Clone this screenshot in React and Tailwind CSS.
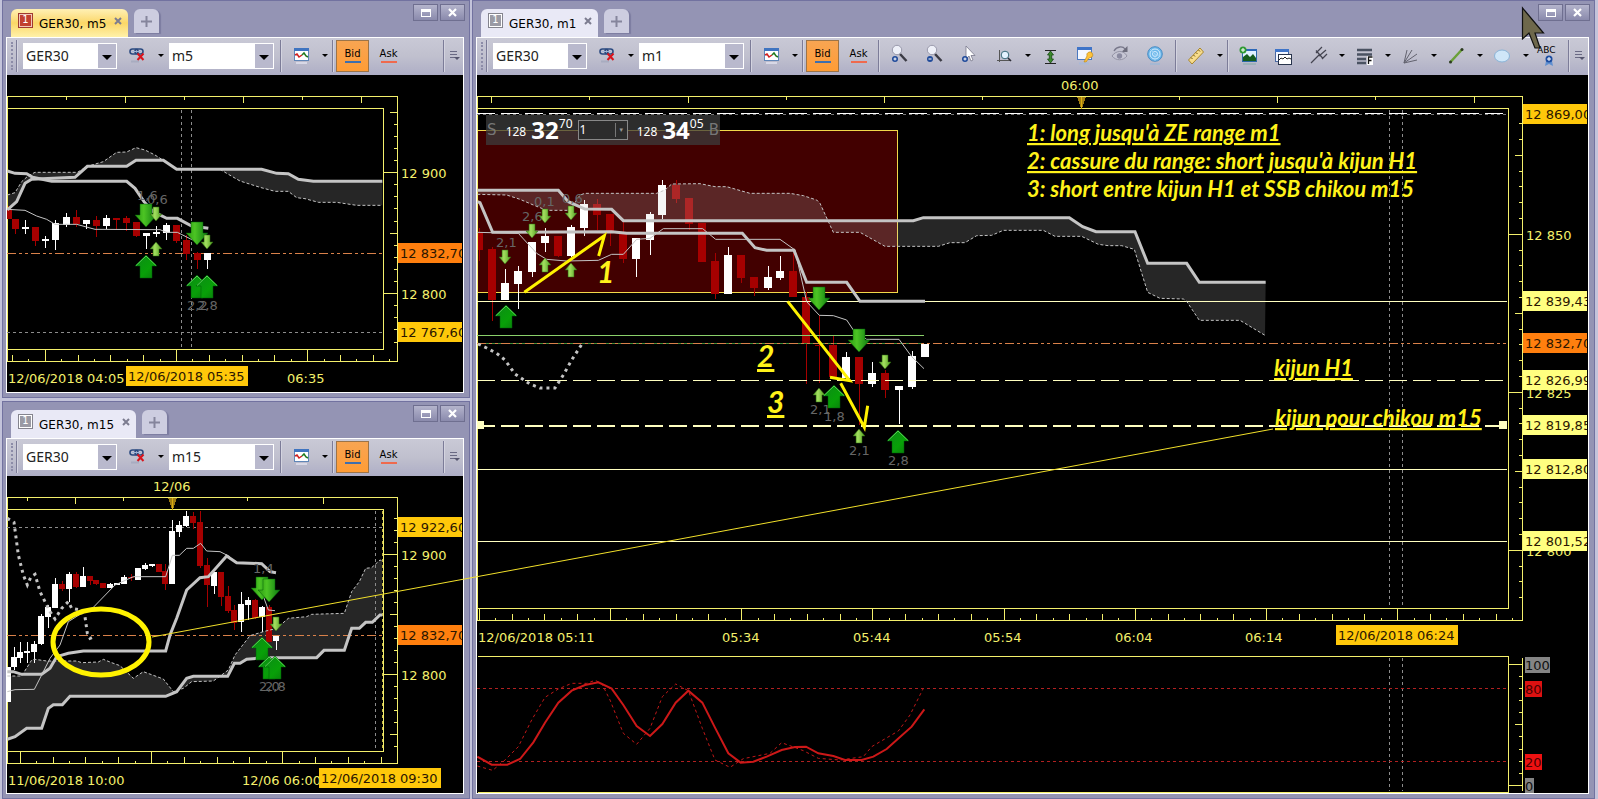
import { useState } from 'react';

const VERDANA = "[font-family:'DejaVu_Sans',Verdana,sans-serif]";
const AXIS = '#f4f06c';
const CREAM = '#ffffc0';
const BULL = '#ffffff';
const BEAR = '#a60000';
const LINE = '#c4c4c4';

// plot data is stored at 3 units per pixel
const U = 3;

const toPoints = (s) =>
  s
    .split(' ')
    .map((p) => p.split(',').map((n) => Number(n) / U).join(','))
    .join(' ');

const px = (n) => Math.floor(n / U) + 0.5;

function Poly({ d, w = 1, color = LINE, dash }) {
  return <polyline points={toPoints(d)} fill="none" stroke={color} strokeWidth={w} strokeDasharray={dash} />;
}

function Cloud({ d, color = '#262626' }) {
  return <polygon points={toPoints(d)} fill={color} />;
}

const reversed = (s) => s.split(' ').reverse().join(' ');

function HLine({ y, x1 = 22, x2, color, dash, w = 1 }) {
  return (
    <line x1={x1 / U} x2={x2 / U} y1={px(y)} y2={px(y)} stroke={color} strokeWidth={w} strokeDasharray={dash} shapeRendering="crispEdges" />
  );
}

function VLine({ x, y1, y2, color = '#8c8c8c', dash = '3 3' }) {
  return (
    <line x1={px(x)} x2={px(x)} y1={y1 / U} y2={y2 / U} stroke={color} strokeDasharray={dash} shapeRendering="crispEdges" />
  );
}

// [kind, x, high, bodyTop, bodyBottom, low]
function Candles({ data, w }) {
  return (
    <g shapeRendering="crispEdges">
      {data.map(([kind, x, hi, top, bot, lo], i) => {
        const color = kind === 'w' ? BULL : BEAR;
        const cx = Math.floor(x / U);
        return (
          <g key={i} fill={color}>
            <rect x={cx} y={hi / U} width="1" height={Math.max(1, (lo - hi) / U)} />
            <rect x={cx - Math.floor(w / 2)} y={top / U} width={w} height={Math.max(1, (bot - top) / U)} />
          </g>
        );
      })}
    </g>
  );
}

// [kind, x, top] with kind U/D for large, u/d for small
function Arrows({ data }) {
  const shapes = {
    U: 'M0 0L11 11H6V23H-6V11H-11Z',
    D: 'M0 23L11 11H6V0H-6V11H-11Z',
    u: 'M0 0L6 7H3V14H-3V7H-6Z',
    d: 'M0 14L6 7H3V0H-3V7H-6Z',
  };
  const fills = { U: 'url(#up)', D: 'url(#down)', u: 'url(#small)', d: 'url(#small)' };
  return data.map(([k, x, y], i) => (
    <g key={i} transform={`translate(${Math.round(x / U)} ${Math.round(y / U)})`}>
      <path d={shapes[k]} fill={fills[k]} stroke={k === 'u' || k === 'd' ? '#2f6b12' : '#035c08'} strokeWidth="0.5" />
      {k === 'U' && <path d="M-10 10.5L0 1L10 10.5" fill="none" stroke="#6fe06a" strokeWidth="0.8" />}
    </g>
  ));
}

function Label({ x, y, children, color = AXIS }) {
  return (
    <text x={Math.round(x / U)} y={Math.round(y / U)} fill={color} className={`text-[13px] ${VERDANA}`} xmlSpace="preserve">
      {children}
    </text>
  );
}

function Marks({ data }) {
  return data.map(([t, x, y], i) => (
    <Label key={i} x={x} y={y} color="#666666">
      {t}
    </Label>
  ));
}

function Tag({ x, y, w, fill, color = '#2b1600', children }) {
  return (
    <svg x={Math.round(x / U)} y={Math.round(y / U)} width={w} height="20">
      <rect width={w} height="20" fill={fill} />
      <text x="2" y="15" fill={color} className={`text-[13px] ${VERDANA}`}>
        {children}
      </text>
    </svg>
  );
}

const range = (a, b) => Array.from({ length: b - a + 1 }, (_, i) => a + i);

function Frame({ top, inTop, inBot, bot, inRight, right, topTicks, marker, xBase, xFrom, xTo, yBase, yStep, yFrom, yTo }) {
  return (
    <g stroke={AXIS} fill="none" shapeRendering="crispEdges">
      <path d={`M7.5 ${bot}V${top}H${right}V${bot}H7.5`} />
      <path d={`M7.5 ${inTop}H${inRight}V${inBot}H7.5`} />
      {topTicks.map(([x, len]) => (
        <path key={x} d={`M${px(x)} ${top}v${len}`} />
      ))}
      {range(xFrom, xTo).map((k) => (
        <path key={k} d={`M${Math.floor((xBase + k * 49.2) / U) + 0.5} ${bot}v${k % 8 === 0 ? -12 : k % 2 === 0 ? -7 : -3}`} />
      ))}
      {range(yFrom, yTo).map((k) => (
        <path key={k} d={`M${right} ${Math.floor((yBase + k * yStep) / U) + 0.5}h${k % 10 === 0 ? inRight - right : k % 5 === 0 ? -8 : -4}`} />
      ))}
      {marker && (
        <g stroke="none">
          <path d={`M${Math.floor(marker / U) - 4} ${top + 0.5}h9l-4 11h-1z`} fill="#a07c10" />
          <rect x={Math.floor(marker / U)} y={top} width="1" height="12" fill="#d8ac10" />
        </g>
      )}
    </g>
  );
}

const PRICE_DASH = '9 3 3 3 3 3';

const M5 = {
  a1: '22,345 45,338 65,305 85,287 105,277 232,277 262,259 310,245 350,217 380,216 408,203 435,210 465,225 490,241',
  b1: '22,390 50,365 75,310 95,298 225,292 262,259 380,259 408,241 490,241',
  a2: '660,268 680,280 720,303 780,322 825,334 865,334 890,353 915,356 955,367 1010,367 1070,376 1147,376',
  b2: '660,268 785,268 830,280 865,281 895,298 940,304 1147,304',
  candles: [
    ['r', 25, 378, 388, 418, 418], ['r', 46, 418, 418, 447, 462], ['w', 76, 421, 440, 446, 462],
    ['r', 106, 441, 441, 483, 498], ['w', 136, 468, 478, 484, 503], ['w', 166, 421, 430, 480, 510],
    ['w', 199, 400, 411, 434, 440], ['r', 230, 390, 410, 431, 440], ['w', 260, 420, 420, 431, 448],
    ['r', 289, 409, 420, 438, 471], ['w', 319, 405, 415, 438, 448], ['r', 349, 415, 414, 419, 447],
    ['r', 379, 408, 415, 430, 452], ['r', 410, 427, 427, 468, 470], ['w', 439, 458, 458, 468, 507],
    ['w', 469, 438, 455, 461, 470], ['w', 499, 430, 435, 458, 480], ['r', 529, 435, 435, 483, 490],
    ['r', 559, 465, 480, 521, 540], ['r', 592, 515, 520, 541, 567], ['w', 622, 520, 520, 541, 567],
  ],
};

function ChartM5() {
  return (
    <svg className="block w-full h-[317px] bg-black" role="img" aria-label="GER30 m5">
      <g transform="translate(-7 5)">
        <Cloud d={`${M5.a1} ${reversed(M5.b1)}`} />
        <Cloud d={`${M5.a2} ${reversed(M5.b2)}`} />
        <Frame top={16.5} inTop={28.5} inBot={269.5} bot={281.5} inRight={383.5} right={397.5}
          topTicks={[[199, 3], [376, 6], [553, 3], [730, 6], [907, 3], [1084, 6]]}
          xBase={136} xFrom={-2} xTo={21} yBase={278} yStep={36.3} yFrom={-5} yTo={14} />
        <HLine y={757} x2={1150} color="#8c8c8c" dash="3 3" />
        <VLine x={544} y1={90} y2={802} />
        <VLine x={574} y1={90} y2={802} />
        <HLine y={520} x2={1147} color="#d9814a" dash={PRICE_DASH} />
        <Candles data={M5.candles} w={7} />
        <Poly d={M5.a1} dash="3 2" />
        <Poly d={M5.a2} dash="3 2" />
        <Poly d="22,388 75,391 110,408 140,418 165,433 230,433 285,448 480,449 500,457 532,457 578,480" />
        <Poly d="22,273 45,280 80,281 98,292 155,304 380,304 405,325 432,365 460,395 500,415 532,415 575,438 625,445" w={3} />
        <Poly d="22,390 50,365 75,310 95,298 225,292 262,259 380,259 408,241 490,241 530,268 785,268 830,280 865,281 895,298 940,304 1147,304" w={3} />
        <Marks data={[['1,6', 412, 360], ['0,6', 440, 373], ['2,2', 562, 690], ['2,8', 592, 690]]} />
        <Arrows data={[['D', 439, 371], ['d', 469, 380], ['u', 469, 487], ['U', 439, 526], ['D', 592, 425], ['d', 622, 464], ['U', 592, 586], ['U', 622, 586]]} />
        <Label x={1203} y={293}>12 900</Label>
        <Label x={1203} y={656}>12 800</Label>
        <Tag x={1194} y={489} w={64} fill="#ff7f0e">12 832,70</Tag>
        <Tag x={1194} y={726} w={64} fill="#ffc80a">12 767,60</Tag>
        <Label x={24} y={908}>12/06/2018 04:05</Label>
        <Tag x={378} y={858} w={122} fill="#ffc80a">12/06/2018 05:35</Tag>
        <Label x={862} y={908}>06:35</Label>
      </g>
    </svg>
  );
}

const M15 = {
  a: '22,843 65,843 95,795 105,793 140,798 230,798 245,803 295,801 310,793 335,803 360,812 400,850 430,830 490,852 520,890 550,880 575,860 640,858 665,840 685,825 705,780 750,722 790,710 830,700 865,670 920,665 935,658 1033,655 1055,590 1078,560 1097,520 1115,518 1140,495 1147,498',
  b: '22,1033 45,1025 80,1000 125,1000 145,940 160,929 187,929 210,904 497,904 530,890 560,850 580,844 683,844 703,805 720,805 740,793 790,788 950,788 972,766 1033,766 1055,700 1078,700 1097,682 1117,682 1140,660 1147,660',
  candles: [
    ['w', 26, 815, 815, 922, 922], ['w', 42, 757, 787, 815, 825], ['w', 62, 742, 772, 790, 805],
    ['w', 82, 742, 768, 774, 805], ['w', 103, 738, 748, 770, 803], ['w', 124, 657, 663, 748, 750],
    ['w', 146, 630, 637, 667, 700], ['w', 166, 550, 567, 638, 640], ['r', 186, 557, 567, 581, 588],
    ['w', 207, 530, 537, 581, 620], ['r', 229, 530, 538, 576, 578], ['w', 249, 515, 543, 575, 577],
    ['r', 270, 543, 543, 557, 570], ['r', 290, 555, 555, 566, 569], ['r', 310, 565, 565, 578, 580],
    ['w', 331, 565, 567, 578, 580], ['w', 352, 563, 565, 570, 570], ['w', 373, 540, 545, 566, 566],
    ['r', 394, 538, 545, 550, 558], ['w', 414, 518, 520, 554, 555], ['w', 435, 505, 510, 521, 524],
    ['w', 456, 508, 507, 513, 515], ['r', 477, 508, 508, 530, 531], ['r', 497, 508, 528, 568, 585],
    ['w', 516, 375, 408, 566, 568], ['w', 538, 378, 390, 411, 425], ['w', 559, 348, 364, 392, 395],
    ['r', 580, 352, 362, 384, 402], ['r', 600, 348, 382, 512, 520], ['r', 621, 490, 510, 571, 635],
    ['w', 642, 530, 532, 573, 598], ['r', 663, 530, 532, 606, 632], ['r', 684, 572, 603, 647, 655],
    ['r', 704, 630, 645, 683, 705], ['w', 724, 590, 627, 682, 710], ['w', 744, 605, 615, 630, 675],
    ['r', 766, 612, 615, 668, 672], ['w', 787, 632, 636, 667, 710], ['r', 807, 630, 636, 740, 742],
    ['w', 828, 722, 722, 738, 765],
  ],
};

function ChartM15() {
  return (
    <svg className="block w-full h-[317px] bg-black" role="img" aria-label="GER30 m15">
      <g transform="translate(-7 -81)">
        <Cloud d={`${M15.a} ${reversed(M15.b)}`} />
        <Frame top={102.5} inTop={114.5} inBot={356.5} bot={368.5} inRight={383.5} right={397.5}
          topTicks={[[82, 3], [227, 6], [370, 3], [742, 3], [970, 6]]} marker={517}
          xBase={61} xFrom={0} xTo={22} yBase={479} yStep={36} yFrom={-3} yTo={16} />
        <HLine y={398} x2={1150} color="#8c8c8c" dash="3 3" />
        <VLine x={1126} y1={348} y2={1060} />
        <VLine x={1147} y1={348} y2={1060} color="#c9b84a" />
        <HLine y={721} x2={1147} color="#d9814a" dash={PRICE_DASH} />
        <Candles data={M15.candles} w={6} />
        <Poly d={M15.a} dash="3 2" />
        <Poly d="22,370 42,382 55,480 70,540 82,570 93,545 105,538 120,590 150,650 165,672 185,640 205,620 215,640 240,645 255,665 262,715 270,730 282,725" w={3} dash="3 4" />
        <Poly d="22,890 45,884 103,883 125,840 150,790 180,750 205,680 245,655 280,637 345,570 400,545 497,545 517,481 538,481 560,460 580,460 602,445 620,468 660,470 690,485" />
        <Poly d="785,590 805,645 825,647" />
        <Poly d="22,830 40,830 65,838 125,838 150,820 170,785 205,775 250,768 497,768 510,720 530,670 560,585 600,548 625,545 680,483 710,503 785,506 810,530 828,533" w={3} />
        <Poly d={M15.b} w={3} />
        <Marks data={[['1,4', 760, 533], ['2,0', 776, 888], ['2,8', 796, 888]]} />
        <Arrows data={[['D', 787, 545], ['D', 806, 553], ['d', 827, 667], ['U', 787, 727], ['U', 806, 784], ['U', 826, 784]]} />
        <ellipse cx="101" cy="247" rx="48" ry="33" fill="none" stroke="#fff200" strokeWidth="5" />
        <Label x={459} y={288}>12/06</Label>
        <Tag x={1194} y={366} w={64} fill="#ffc80a">12 922,60</Tag>
        <Label x={1203} y={495}>12 900</Label>
        <Tag x={1194} y={690} w={64} fill="#ff7f0e">12 832,70</Tag>
        <Label x={1203} y={855}>12 800</Label>
        <Label x={24} y={1171}>11/06/2018 10:00</Label>
        <Label x={727} y={1171}>12/06 06:00</Label>
        <Tag x={957} y={1119} w={122} fill="#ffc80a">12/06/2018 09:30</Tag>
      </g>
    </svg>
  );
}

const M1 = {
  b: '22,331 265,331 295,365 345,387 425,388 460,422 1330,422 1360,413 1798,413 1838,440 1878,455 1995,455 2033,550 2150,550 2188,607 2387,607',
  a: '22,343 110,345 150,358 190,375 230,391 300,391 330,345 345,340 560,340 585,330 605,312 690,311 735,320 770,320 840,340 960,340 1000,347 1040,360 1050,370 1090,457 1170,457 1245,499 1405,499 1440,488 1485,488 1520,467 1565,466 1600,451 1720,451 1755,469 1835,469 1885,493 1915,497 1955,497 1993,508 2033,637 2070,655 2140,657 2150,664 2188,721 2310,721 2385,766',
  candles: [
    ['r', 27, 445, 460, 510, 543], ['r', 67, 500, 507, 660, 722], ['w', 107, 567, 609, 660, 660],
    ['w', 146, 557, 573, 612, 686], ['w', 186, 486, 486, 576, 590], ['w', 225, 445, 468, 489, 516],
    ['r', 264, 468, 468, 528, 530], ['w', 303, 435, 441, 528, 530], ['w', 342, 360, 373, 444, 468],
    ['r', 381, 357, 372, 405, 450], ['r', 420, 402, 402, 460, 498], ['r', 460, 425, 462, 537, 550],
    ['w', 500, 475, 475, 537, 590], ['w', 540, 395, 402, 480, 525], ['w', 578, 300, 315, 405, 418],
    ['r', 618, 300, 314, 357, 370], ['r', 657, 354, 354, 432, 450], ['r', 696, 430, 430, 546, 546],
    ['r', 736, 520, 543, 642, 657], ['w', 774, 502, 525, 642, 642], ['r', 813, 525, 525, 594, 608],
    ['r', 853, 590, 591, 624, 648], ['w', 894, 558, 591, 624, 630], ['w', 932, 528, 573, 594, 600],
    ['r', 971, 520, 573, 651, 651], ['r', 1010, 635, 651, 790, 912], ['r', 1048, 706, 794, 798, 910],
    ['r', 1089, 768, 794, 892, 895], ['w', 1128, 815, 831, 895, 900], ['r', 1167, 831, 831, 912, 1035],
    ['w', 1207, 847, 879, 912, 920], ['r', 1246, 870, 879, 930, 955], ['w', 1287, 918, 918, 930, 1032],
    ['w', 1326, 812, 828, 921, 927], ['w', 1365, 791, 791, 831, 831],
  ],
};

const STOCH = '22,470 65,494 112,494 150,477 190,427 225,368 265,308 305,272 345,255 385,247 425,266 460,315 500,378 540,408 577,372 617,308 655,272 697,308 735,383 775,460 812,488 850,485 890,470 935,450 975,441 1008,440 1045,460 1090,468 1125,480 1175,480 1210,470 1250,447 1290,411 1325,380 1363,328';
const STOCH_FAST = '22,498 68,511 105,480 145,440 185,360 225,292 265,267 305,250 350,250 375,241 395,250 420,300 460,400 500,433 540,385 577,290 617,252 655,272 697,385 735,480 780,502 820,476 900,460 935,428 1000,452 1045,475 1110,480 1180,470 1205,440 1285,393 1320,345 1360,265';

const NOTE = 'font-bold italic [font-family:Lato,Carlito,Calibri,sans-serif]';

function Note({ x, y, children, size = 'text-[22px]', underline = true }) {
  return (
    <text x={Math.round(x / U)} y={Math.round(y / U)} fill="#fff21a" className={`${NOTE} ${size} ${underline ? 'underline' : ''}`}>
      {children}
    </text>
  );
}

function ScaleTag({ y, w, fill, color, children }) {
  return (
    <g>
      <rect x="1055" y={Math.round(y / U)} width={w} height="16" fill={fill} />
      <Label x={3165} y={y + 40} color={color}>
        {children}
      </Label>
    </g>
  );
}

function ChartM1() {
  return (
    <svg className="block w-full h-[718px] bg-black" role="img" aria-label="GER30 m1">
      <g transform="translate(-7 5)">
        <rect x="7" y="50.5" width="420" height="162" fill="#420000" stroke="#f2d84a" shapeRendering="crispEdges" />
        <Candles data={M1.candles} w={8} />
        <Cloud d={`${M1.a} ${reversed(M1.b)}`} color="rgba(200,200,200,0.19)" />
        <Frame top={16.5} inTop={28.5} inBot={528.5} bot={540.5} inRight={1038.5} right={1052.5}
          topTicks={[[64, 6], [358, 3], [655, 6], [950, 3], [1243, 6], [1537, 3], [2128, 3], [2422, 6], [2717, 3], [3013, 6]]} marker={1834}
          xBase={28} xFrom={0} xTo={63} yBase={463} yStep={47.4} yFrom={-7} yTo={23} />
        <HLine y={103} x2={3115} color="#777" dash="3 3" />
        <HLine y={100} x2={3100} color="#fff" dash="18 6" />
        <VLine x={2758} y1={90} y2={1580} />
        <VLine x={2797} y1={90} y2={1580} />
        <VLine x={2758} y1={1735} y2={2133} />
        <VLine x={2797} y1={1735} y2={2133} />
        <HLine y={664} x2={3111} color={CREAM} />
        <HLine y={766} x2={1362} color="#8ad06a" />
        <HLine y={790} x2={1355} color="#3f8f3a" />
        <HLine y={790} x2={3108} color="#d9814a" dash={PRICE_DASH} />
        <HLine y={901} x2={3100} color={CREAM} dash="18 6" />
        <HLine y={1035} x2={3100} color={CREAM} dash="18 6" w={2} />
        <rect x="7" y="341" width="7" height="8" fill={CREAM} />
        <rect x="1029" y="341" width="8" height="8" fill={CREAM} />
        <HLine y={1168} x2={3111} color={CREAM} />
        <HLine y={1384} x2={3111} color={CREAM} />

        <Poly d={M1.a} dash="3 2" />
        <Poly d="24,792 50,804 80,820 105,840 135,882 180,912 210,924 255,924 280,885 305,840 336,792" w={3} dash="3 4" />
        <Poly d="22,457 145,460 200,520 230,538 290,543 385,541 425,523 460,523 500,478 540,475 580,446 698,446 737,478 930,478 975,510 1010,665 1048,706 1090,707 1130,720 1150,750 1190,778 1287,778 1325,830 1362,866" />
        <Poly d="22,365 30,368 68,457 425,455 470,460 817,460 855,503 890,511 972,511 1010,607 1130,607 1170,664 1365,664" w={3} />
        <Poly d={M1.b} w={3} />

        <Marks data={[['2,1', 78, 500], ['2,6', 155, 422], ['0,1', 193, 377], ['0,6', 275, 370], ['2,1', 1019, 1003], ['1,8', 1063, 1024], ['2,1', 1138, 1126], ['2,8', 1255, 1155]]} />
        <Arrows data={[['U', 107, 675], ['d', 106, 511], ['d', 185, 432], ['d', 224, 388], ['d', 304, 378], ['u', 224, 533], ['u', 304, 549], ['D', 1048, 620], ['D', 1168, 748], ['d', 1246, 825], ['u', 1048, 924], ['U', 1091, 916], ['u', 1168, 1048], ['U', 1285, 1049]]} />

        <Poly d="163,637 403,467 386,528" w={3} color="#fff200" />
        <Poly d="953,664 1139,902 1080,892" w={3} color="#fff200" />
        <Poly d="1112,910 1183,1042 1193,977" w={3} color="#fff200" />
        <Note x={381} y={608} size="text-[30px]" underline={false}>1</Note>
        <Note x={861} y={860} size="text-[30px]">2</Note>
        <Note x={891} y={998} size="text-[30px]">3</Note>
        <Note x={1671} y={183}>1: long jusqu'à ZE range m1</Note>
        <Note x={1671} y={267}>2: cassure du range: short jusqu'à kijun H1</Note>
        <Note x={1671} y={350} underline={false}>3: short entre kijun H1 et SSB chikou m15</Note>
        <Note x={2412} y={888}>kijun H1</Note>
        <Note x={2416} y={1037}>kijun pour chikou m15</Note>

        <Label x={1774} y={30}>06:00</Label>
        <Label x={3168} y={480}>12 850</Label>
        <Label x={3168} y={955}>12 825</Label>
        <Label x={3168} y={1429}>12 800</Label>
        <Tag x={3159} y={71} w={64} fill="#ffc80a">12 869,00</Tag>
        <Tag x={3159} y={633} w={64} fill="#ffff80">12 839,43</Tag>
        <Tag x={3159} y={759} w={64} fill="#ff7f0e">12 832,70</Tag>
        <Tag x={3159} y={870} w={64} fill="#ffff80">12 826,99</Tag>
        <Tag x={3159} y={1005} w={64} fill="#ffff80">12 819,85</Tag>
        <Tag x={3159} y={1137} w={64} fill="#ffff80">12 812,80</Tag>
        <Tag x={3159} y={1353} w={64} fill="#ffff80">12 801,52</Tag>

        <Label x={24} y={1686}>12/06/2018 05:11</Label>
        <Label x={755} y={1686}>05:34</Label>
        <Label x={1148} y={1686}>05:44</Label>
        <Label x={1541} y={1686}>05:54</Label>
        <Label x={1934} y={1686}>06:04</Label>
        <Label x={2326} y={1686}>06:14</Label>
        <Tag x={2598} y={1635} w={122} fill="#ffc80a">12/06/2018 06:24</Tag>

        {/* stochastic pane */}
        <g stroke={AXIS} fill="none" shapeRendering="crispEdges">
          <path d="M8 576.5H1038.5V712H8" />
          <path d="M1052.5 578V711" />
          {range(0, 10).map((k) => (
            <path key={k} d={`M1052.5 ${Math.floor((1753 + k * 36.3) / U) + 0.5}h${k % 10 === 0 ? -14 : k === 5 ? -8 : -4}`} />
          ))}
        </g>
        <HLine y={1825} x2={3108} color="#b02020" dash="3 3" />
        <HLine y={2044} x2={3108} color="#b02020" dash="3 3" />
        <g transform="translate(0 520)">
          <Poly d={STOCH_FAST} color="#c01818" dash="3 3" />
          <Poly d={STOCH} color="#cc1818" w={2} />
        </g>
        <ScaleTag y={1731} w={25} fill="#848484" color="#111">100</ScaleTag>
        <ScaleTag y={1803} w={17} fill="#dd1111" color="#4a0000">80</ScaleTag>
        <ScaleTag y={2022} w={17} fill="#ee1111" color="#4a0000">20</ScaleTag>
        <ScaleTag y={2094} w={9} fill="#848484" color="#111">0</ScaleTag>
      </g>
    </svg>
  );
}

const SEGOE = "[font-family:'Noto_Sans','Open_Sans',sans-serif]";

function QuotePanel() {
  return (
    <div className={`absolute left-[9px] top-10 flex h-[30px] w-[234px] items-center justify-between bg-[#3c3c3c]/75 px-px text-white ${SEGOE}`}>
      <span className={`text-[15px] text-[#777] ${VERDANA}`}>S</span>
      <span className="mt-1 ml-1 text-xs">128</span>
      <span className="flex items-start text-[24px] leading-6 font-bold">
        32<sup className="top-0 text-xs leading-3 font-normal">70</sup>
      </span>
      <label className="flex h-5 w-[50px] items-center border border-[#888] bg-[#2c2c2c]">
        <input aria-label="Lots" defaultValue="1" className="w-9 min-w-0 bg-transparent px-px text-xs outline-none" />
        <span className="flex h-3.5 flex-1 items-center justify-center border-l border-[#777] text-[6px] text-[#999]">▼</span>
      </label>
      <span className="mt-1 ml-1 text-xs">128</span>
      <span className="flex items-start text-[24px] leading-6 font-bold">
        34<sup className="top-0 text-xs leading-3 font-normal">05</sup>
      </span>
      <span className={`text-[15px] text-[#777] ${VERDANA}`}>B</span>
    </div>
  );
}

/* ---------- toolbar icons, 19x24 boxes ---------- */

const icons = {
  link: (
    <>
      <rect x="2" y="5" width="8" height="5" rx="2.5" fill="none" stroke="#2b4a80" strokeWidth="1.6" />
      <rect x="7" y="5" width="8" height="5" rx="2.5" fill="none" stroke="#2b4a80" strokeWidth="1.6" />
      <path d="M4 7.500h9" stroke="#9db4d8" />
      <path d="M9.500 9.500l6 6.500M15.500 9.500l-6 6.500" stroke="#d8141c" strokeWidth="2" />
      <path d="M3 17.500h8" stroke="#8c96b0" strokeWidth="2" opacity=".4" />
    </>
  ),
  chart: (
    <>
      <rect x="2.500" y="4.500" width="14" height="12" fill="#fff" stroke="#5f86b8" />
      <rect x="2" y="4" width="15" height="3" fill="#3f74c0" />
      <path d="M3 11l2-1 2 3 3-2" fill="none" stroke="#d02020" strokeWidth="1.5" />
      <path d="M10 11l2-2 2 3 2 1" fill="none" stroke="#1f7a1f" strokeWidth="1.5" />
      <path d="M4 19h11" stroke="#e6e6f2" strokeWidth="2" opacity=".7" />
    </>
  ),
  zoomIn: (
    <>
      <path d="M10 10l6.500 7" stroke="#3a3a44" strokeWidth="2.500" />
      <circle cx="7" cy="6" r="4.700" fill="#eef0f8" stroke="#9a9aac" />
      <circle cx="5" cy="15" r="3" fill="#1f4a9a" />
      <path d="M3.500 15h3M5 13.500v3" stroke="#fff" />
    </>
  ),
  zoomOut: (
    <>
      <path d="M10 10l6.500 7" stroke="#3a3a44" strokeWidth="2.500" />
      <circle cx="7" cy="6" r="4.700" fill="#eef0f8" stroke="#9a9aac" />
      <circle cx="5" cy="15" r="3" fill="#1f4a9a" />
      <path d="M3.500 15h3" stroke="#fff" />
    </>
  ),
  pointer: (
    <>
      <path d="M6 2v13l3-3 2 5 2-1-2-4.500h4z" fill="#fff" stroke="#77778a" strokeWidth=".8" />
      <circle cx="5" cy="15" r="3" fill="#1f4a9a" />
      <path d="M3.500 15h3M5 13.500v3" stroke="#fff" />
    </>
  ),
  chartZoom: (
    <>
      <path d="M4.500 6v12M2 16.500h14" stroke="#555" fill="none" />
      <circle cx="10" cy="11" r="3.800" fill="#e4f2ff" stroke="#3a6a7a" />
      <path d="M13 14l3 3" stroke="#2d2d36" strokeWidth="1.600" />
    </>
  ),
  updown: (
    <>
      <path d="M4 6.500h11M4 19.500h11" stroke="#222" strokeWidth="1.200" />
      <path d="M9.500 7l3 4h-1.800v4h1.800l-3 4-3-4h1.800v-4h-1.800z" fill="#3c8a2c" stroke="#164a10" strokeWidth=".8" />
    </>
  ),
  winKey: (
    <>
      <rect x="1.500" y="3.500" width="14" height="12" fill="#f4f7ff" stroke="#4a78c0" />
      <rect x="1" y="3" width="15" height="3" fill="#3f74c8" />
      <path d="M8 18l3-6a3 3 0 1 1 5 1l-3 1-3 4z" fill="#ffc23a" stroke="#c08c1c" strokeWidth=".7" />
      <path d="M3 19.500h10" stroke="#9fb8e0" strokeWidth="2" opacity=".6" />
    </>
  ),
  eye: (
    <>
      <path d="M3 7C6 2 12 2 14 5" fill="none" stroke="#77778a" strokeWidth="1.300" />
      <path d="M16.500 2v6h-6z" fill="#6c6c7c" />
      <path d="M1 12c4-6 12-6 15 0-4 5-11 5-15 0z" fill="#c6c6d4" stroke="#9494a6" />
      <circle cx="8.500" cy="12" r="2.700" fill="#8a8aa0" />
    </>
  ),
  globe: (
    <>
      <circle cx="9" cy="10" r="7.300" fill="#6cb8ea" stroke="#4a8cc4" />
      <circle cx="9" cy="10" r="5" fill="none" stroke="#d4ecff" />
      <circle cx="9" cy="10" r="2.500" fill="none" stroke="#d4ecff" />
      <path d="M9 10L4 5M9 10l6 2M9 10v7" stroke="#a4d4f4" strokeWidth=".8" fill="none" />
      <path d="M4 20h10" stroke="#8ab8e0" strokeWidth="2" opacity=".4" />
    </>
  ),
  ruler: (
    <>
      <path d="M1.500 16L13 4l3.500 4L5 20z" fill="#f7dc8c" stroke="#a8862c" />
      <path d="M4 13.500l1.500 1.500M6.500 11l1.500 1.500M9 8.500l1.500 1.500M11.500 6L13 7.500" stroke="#6c5416" />
    </>
  ),
  picture: (
    <>
      <rect x="3.500" y="5.500" width="14" height="12" fill="#dff0ff" stroke="#2c68a8" />
      <rect x="3" y="5" width="15" height="2" fill="#2c68b8" />
      <path d="M4 17v-4l4-3 3 3 3-3 3 4v3z" fill="#155c1c" />
      <circle cx="4" cy="6" r="3.500" fill="#2f9a34" />
      <path d="M2 6h4M4 4v4" stroke="#fff" />
      <path d="M4 20h13" stroke="#77a8a0" strokeWidth="2" opacity=".4" />
    </>
  ),
  windows: (
    <>
      <rect x="1.500" y="5.500" width="13" height="12" fill="#f4f7ff" stroke="#4a68a0" />
      <rect x="1" y="5" width="14" height="3" fill="#3f74c8" />
      <rect x="4.500" y="10.500" width="13" height="10" fill="#fff" stroke="#28344c" />
      <path d="M5 16l2-2 2 1 2-2 2 2 2-1 2 1" fill="none" stroke="#222" />
    </>
  ),
  fork: <path d="M2 19l8-8M7 6.500l7 8M7 9l6-6M10 12l7-6M13 15l5-5" stroke="#444450" strokeWidth="1.200" fill="none" />,
  fibs: (
    <>
      <path d="M2 6h15M2 10.500h15M2 15h9M2 19h9" stroke="#4a5262" strokeWidth="2.500" />
      <rect x="12" y="12" width="6" height="9" fill="#fff" />
      <path d="M13.500 20v-7h4M13.500 16.500h3" stroke="#111" strokeWidth="1.300" fill="none" />
    </>
  ),
  fan: <path d="M3 19L6 6M3 19L11 6M3 19L16 10M3 19L16 16" stroke="#62626e" fill="none" />,
  segment: (
    <>
      <path d="M3.500 18L15 5.500" stroke="#6aa038" strokeWidth="2.500" />
      <circle cx="3.500" cy="18" r="1.500" fill="#2c3a20" />
      <circle cx="15" cy="5.500" r="1.500" fill="#2c3a20" />
    </>
  ),
  ellipse: <ellipse cx="9" cy="12" rx="7.500" ry="6" fill="#cfe6f8" stroke="#8ab4d8" />,
  medal: (
    <>
      <path d="M7 17l-1 5 4-2 4 2-1-5z" fill="#5f8fd0" />
      <circle cx="10" cy="15" r="3.500" fill="#1c4ca0" />
      <path d="M8 15h4M10 13v4" stroke="#fff" />
    </>
  ),
};

function Icon({ name }) {
  return (
    <svg width="19" height="24" viewBox="0 0 19 24" aria-hidden="true">
      {icons[name]}
    </svg>
  );
}

function Tool({ icon, label, caret = false }) {
  return (
    <>
      <button type="button" aria-label={label} className="flex h-8 w-[35px] shrink-0 items-center justify-center">
        <Icon name={icon} />
      </button>
      {caret && (
        <button type="button" aria-label={`${label} options`} className="flex h-8 w-[11px] shrink-0 items-center justify-center">
          <span className="border-x-[3px] border-t-[3px] border-x-transparent border-t-black" />
        </button>
      )}
    </>
  );
}

const Sep = () => <span className="mx-0.5 h-8 w-0.5 shrink-0 border-l border-[#7c7c98] bg-[#d4d4e0]" />;

function Combo({ label, value, options, className }) {
  const [v, setV] = useState(value);
  return (
    <div className={`relative h-[26px] shrink-0 border border-white bg-white ${className}`}>
      <select
        aria-label={label}
        value={v}
        onChange={(e) => setV(e.target.value)}
        className={`block h-full w-full appearance-none bg-white pl-0.5 text-sm text-[#222] outline-none ${SEGOE}`}
      >
        {options.map((o) => (
          <option key={o}>{o}</option>
        ))}
      </select>
      <span className="pointer-events-none absolute inset-y-0 right-0 flex w-[18px] items-center justify-center bg-[#b9b9cd]">
        <span className="mt-1 border-x-[5px] border-t-[5px] border-x-transparent border-t-black" />
      </span>
    </div>
  );
}

function Toolbar({ period, full }) {
  return (
    <div className="flex h-[37px] items-center overflow-hidden bg-linear-to-b from-[#c9c9d6] via-[#c0c0ce] to-[#aeaec6] pb-0.5 pl-1">
      <span className="h-7 w-[3px] shrink-0 border-l-2 border-dotted border-[#8c8ca8]" />
      <Sep />
      <Combo label="Symbol" value="GER30" options={['GER30', 'FRA40', 'EUR/USD']} className="ml-[3px] mr-[3px] w-[94px]" />
      <Tool icon="link" label="Link charts" caret />
      <Combo label="Period" value={period} options={['m1', 'm5', 'm15', 'H1']} className="ml-[3px] mr-1 w-[105px]" />
      <Sep />
      <Tool icon="chart" label="Chart type" caret />
      <Sep />
      <button type="button" className={`flex h-8 w-[33px] shrink-0 flex-col items-center justify-center border border-[#9c7448] bg-linear-to-b from-[#f8a552] to-[#ff9c34] text-[10px] leading-3 text-black ${VERDANA}`}>
        Bid
        <span className="mt-px h-0.5 w-4 bg-[#3f6fae]" />
      </button>
      <button type="button" className={`ml-0.5 flex h-8 w-[35px] shrink-0 flex-col items-center justify-center text-[10px] leading-3 text-black ${VERDANA}`}>
        Ask
        <span className="mt-px h-0.5 w-4 bg-[#ef6a4e]" />
      </button>
      {full && (
        <>
          <Sep />
          <Tool icon="zoomIn" label="Zoom in" />
          <Tool icon="zoomOut" label="Zoom out" />
          <Tool icon="pointer" label="Cursor" />
          <Tool icon="chartZoom" label="Zoom area" caret />
          <Tool icon="updown" label="Fit height" />
          <Tool icon="winKey" label="Settings" />
          <Tool icon="eye" label="Show" />
          <Tool icon="globe" label="News" />
          <Sep />
          <Tool icon="ruler" label="Measure" caret />
          <Sep />
          <Tool icon="picture" label="Add picture" />
          <Tool icon="windows" label="Indicators" />
          <Tool icon="fork" label="Pitchfork" caret />
          <Tool icon="fibs" label="Fibonacci" caret />
          <Tool icon="fan" label="Fan" caret />
          <Tool icon="segment" label="Line" caret />
          <Tool icon="ellipse" label="Shape" caret />
          <button type="button" aria-label="Text label" className="relative flex h-8 w-[35px] shrink-0 items-center justify-center">
            <Icon name="medal" />
            <span className={`absolute top-1 left-1.5 text-[9px] leading-3 text-black ${VERDANA}`}>ABC</span>
          </button>
        </>
      )}
      <div className="ml-auto flex items-center">
        <Sep />
        <button type="button" aria-label="More" className="flex w-4 flex-col items-center">
          <svg width="10" height="11" viewBox="0 0 10 11" aria-hidden="true">
            <path d="M0 1.500h7M0 4.500h7M0 7.500h5" stroke="#6a6a84" />
            <path d="M4 7h6l-3 3z" fill="#55556e" />
          </svg>
        </button>
      </div>
    </div>
  );
}

const winBtn = 'flex h-[17px] w-[25px] items-center justify-center border border-[#6f6f90] bg-linear-to-b from-[#b4b4cc] to-[#8a8aac] text-white';

function ChartWindow({ title, period, active, full, children }) {
  return (
    <section className="flex flex-col border border-[#7272a0] bg-[#9494b4]">
      <header className="flex h-9 items-end justify-between pl-2 pr-1">
        <div className="flex h-7 items-start gap-1.5">
          <div
            className={`flex h-7 items-center rounded-t-md pl-[7px] pr-1.5 ${
              active ? 'bg-linear-to-b from-[#fff0b4] via-[#fbd766] to-[#fff1a8]' : 'bg-[#e9e9f6]'
            }`}
          >
            <span
              className={`mb-1.5 flex h-[15px] w-[15px] items-center justify-center border text-[10px] leading-none text-white outline-1 -outline-offset-2 ${VERDANA} ${
                active ? 'border-[#a03a30] bg-[#c2402f] outline-[#f2c8b8]' : 'border-[#84848e] bg-[#9a9aa4] outline-white'
              }`}
            >
              1
            </span>
            <span className={`mt-0.5 ml-1.5 text-xs text-black ${VERDANA}`}>{title}</span>
            <button type="button" aria-label="Close tab" className="mb-1 ml-2">
              <svg width="8" height="8" viewBox="0 0 8 8" aria-hidden="true">
                <path d="M1 1l6 6M7 1L1 7" stroke="#7c7c90" strokeWidth="2" />
              </svg>
            </button>
          </div>
          <button type="button" aria-label="New tab" className="flex h-6 w-[25px] items-center justify-center rounded-t-md bg-[#cdcde0] shadow-[2px_1px_1px_#7c7ca0]">
            <svg width="11" height="11" viewBox="0 0 11 11" aria-hidden="true">
              <path d="M5.500 0v11M0 5.500h11" stroke="#85859c" strokeWidth="2" />
            </svg>
          </button>
        </div>
        <div className="flex gap-0.5 self-start pt-[3px]">
          <button type="button" aria-label="Maximize" className={winBtn}>
            <span className="h-2 w-2.5 border border-t-[3px] border-white" />
          </button>
          <button type="button" aria-label="Close" className={winBtn}>
            <svg width="9" height="9" viewBox="0 0 9 9" aria-hidden="true">
              <path d="M1 1l7 7M8 1L1 8" stroke="#fff" strokeWidth="2.200" />
            </svg>
          </button>
        </div>
      </header>
      <div className="mr-[5px] mb-1 ml-[3px] border border-white">
        <Toolbar period={period} full={full} />
        <div className="relative">{children}</div>
      </div>
    </section>
  );
}

function Overlay() {
  return (
    <svg className="pointer-events-none absolute inset-0 h-full w-full" aria-hidden="true">
      <defs>
        <linearGradient id="up" x1="0" y1="0" x2="1" y2="1">
          <stop offset="0" stopColor="#0c8a18" />
          <stop offset=".6" stopColor="#08a008" />
          <stop offset="1" stopColor="#0a7a0c" />
        </linearGradient>
        <linearGradient id="down" x1="0" y1="0" x2="1" y2="0">
          <stop offset="0" stopColor="#2a9a10" />
          <stop offset=".4" stopColor="#4cc424" />
          <stop offset="1" stopColor="#0c7a10" />
        </linearGradient>
        <linearGradient id="small" x1="0" y1="0" x2="1" y2="0">
          <stop offset="0" stopColor="#4f9a24" />
          <stop offset=".4" stopColor="#a4e060" />
          <stop offset="1" stopColor="#4c9a1c" />
        </linearGradient>
      </defs>
      <path d="M152 637L1273 429" stroke="#f2e02a" />
      <path d="M1522.500 8v31l6.500-6 6 15h5l-5-15h8.500z" fill="#6e684c" stroke="#111" strokeWidth="1.200" />
    </svg>
  );
}

export default function App() {
  return (
    <main className="relative flex min-h-screen gap-0.5 overflow-hidden bg-[#c3c3da] pr-[3px] pl-0.5">
      <div className="flex w-[468px] shrink-0 flex-col gap-[3px]">
        <ChartWindow title="GER30, m5" period="m5" active>
          <ChartM5 />
        </ChartWindow>
        <ChartWindow title="GER30, m15" period="m15">
          <ChartM15 />
        </ChartWindow>
      </div>
      <div className="min-w-0 flex-1">
        <ChartWindow title="GER30, m1" period="m1" full>
          <ChartM1 />
          <QuotePanel />
        </ChartWindow>
      </div>
      <Overlay />
    </main>
  );
}
